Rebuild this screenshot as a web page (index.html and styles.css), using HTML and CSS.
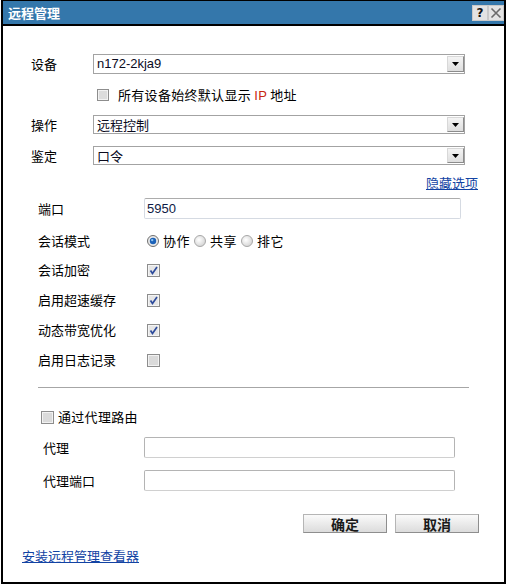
FILE: index.html
```html
<!DOCTYPE html>
<html lang="zh-CN">
<head>
<meta charset="utf-8">
<title>远程管理</title>
<link rel="stylesheet" href="styles.css">
</head>
<body>
<div class="dialog">
  <div class="titlebar">
    <span class="title">远程管理</span>
    <div class="tbtns">
      <span class="tbtn help">?</span>
      <span class="tbtn close"><svg width="12" height="12" viewBox="0 0 12 12"><path d="M1.5 1.5 L10.5 10.5 M10.5 1.5 L1.5 10.5" stroke="#6a6a6a" stroke-width="1.6" fill="none"/></svg></span>
    </div>
  </div>
  <div class="body">
    <div class="row r-device">
      <span class="lbl top-lbl">设备</span>
      <div class="select"><span class="val latin">n172-2kja9</span><span class="arrow"><svg width="7" height="4" viewBox="0 0 7 4"><path d="M0 0 H7 L3.5 4 Z" fill="#000"/></svg></span></div>
    </div>
    <div class="row r-ipcheck">
      <span class="cb"><svg width="12" height="12" viewBox="0 0 12 12"><rect x="0.5" y="0.5" width="11" height="11" fill="#f2f2f2" stroke="#8d8d8d"/><rect x="2" y="2" width="8" height="8" fill="#dcdcdc"/></svg></span>
      <span class="cbtext">所有设备始终默认显示 <span class="ip">IP</span> 地址</span>
    </div>
    <div class="row r-op">
      <span class="lbl top-lbl">操作</span>
      <div class="select sm"><span class="val">远程控制</span><span class="arrow"><svg width="7" height="4" viewBox="0 0 7 4"><path d="M0 0 H7 L3.5 4 Z" fill="#000"/></svg></span></div>
    </div>
    <div class="row r-auth">
      <span class="lbl top-lbl">鉴定</span>
      <div class="select sm"><span class="val">口令</span><span class="arrow"><svg width="7" height="4" viewBox="0 0 7 4"><path d="M0 0 H7 L3.5 4 Z" fill="#000"/></svg></span></div>
    </div>
    <div class="row r-hide">
      <a class="link" href="#">隐藏选项</a>
    </div>

    <div class="row opt r-port">
      <span class="lbl opt-lbl">端口</span>
      <div class="input port"><span class="latin num">5950</span></div>
    </div>
    <div class="row opt r-mode">
      <span class="lbl opt-lbl">会话模式</span>
      <div class="radios">
        <span class="rb"><svg width="12" height="12" viewBox="0 0 12 12"><circle cx="6" cy="6" r="5.5" fill="#e8e8e8" stroke="#6f6f6f"/><circle cx="6" cy="6" r="3.2" fill="#1c62b8"/><circle cx="5.2" cy="5.1" r="1.2" fill="#8fc4f0"/></svg></span><span class="rtext">协作</span>
        <span class="rb"><svg width="12" height="12" viewBox="0 0 12 12"><defs><radialGradient id="g1" cx="0.4" cy="0.4" r="0.7"><stop offset="0" stop-color="#ffffff"/><stop offset="1" stop-color="#cfcfcf"/></radialGradient></defs><circle cx="6" cy="6" r="5.5" fill="url(#g1)" stroke="#a8a8a8"/></svg></span><span class="rtext">共享</span>
        <span class="rb"><svg width="12" height="12" viewBox="0 0 12 12"><circle cx="6" cy="6" r="5.5" fill="url(#g1)" stroke="#a8a8a8"/></svg></span><span class="rtext">排它</span>
      </div>
    </div>
    <div class="row opt r-chk first">
      <span class="lbl opt-lbl">会话加密</span>
      <span class="cb ctl"><svg width="13" height="13" viewBox="0 0 13 13"><rect x="0.5" y="0.5" width="12" height="12" fill="#f4f4f4" stroke="#8d8d8d"/><rect x="2" y="2" width="9" height="9" fill="#e6e6e6"/><path d="M3.5 6.5 L5.5 9.5 L10 3" stroke="#2d4b9c" stroke-width="1.7" fill="none"/></svg></span>
    </div>
    <div class="row opt r-chk">
      <span class="lbl opt-lbl">启用超速缓存</span>
      <span class="cb ctl"><svg width="13" height="13" viewBox="0 0 13 13"><rect x="0.5" y="0.5" width="12" height="12" fill="#f4f4f4" stroke="#8d8d8d"/><rect x="2" y="2" width="9" height="9" fill="#e6e6e6"/><path d="M3.5 6.5 L5.5 9.5 L10 3" stroke="#2d4b9c" stroke-width="1.7" fill="none"/></svg></span>
    </div>
    <div class="row opt r-chk">
      <span class="lbl opt-lbl">动态带宽优化</span>
      <span class="cb ctl"><svg width="13" height="13" viewBox="0 0 13 13"><rect x="0.5" y="0.5" width="12" height="12" fill="#f4f4f4" stroke="#8d8d8d"/><rect x="2" y="2" width="9" height="9" fill="#e6e6e6"/><path d="M3.5 6.5 L5.5 9.5 L10 3" stroke="#2d4b9c" stroke-width="1.7" fill="none"/></svg></span>
    </div>
    <div class="row opt r-chk">
      <span class="lbl opt-lbl">启用日志记录</span>
      <span class="cb ctl"><svg width="13" height="13" viewBox="0 0 13 13"><rect x="0.5" y="0.5" width="12" height="12" fill="#f2f2f2" stroke="#8d8d8d"/><rect x="2" y="2" width="9" height="9" fill="#dadada"/></svg></span>
    </div>

    <div class="sep"></div>

    <div class="row r-proxycheck">
      <span class="cb"><svg width="13" height="13" viewBox="0 0 13 13"><rect x="0.5" y="0.5" width="12" height="12" fill="#f2f2f2" stroke="#8d8d8d"/><rect x="2" y="2" width="9" height="9" fill="#dadada"/></svg></span>
      <span class="cbtext tight">通过代理路由</span>
    </div>
    <div class="row proxy r-proxy">
      <span class="lbl proxy-lbl">代理</span>
      <div class="input pinput"></div>
    </div>
    <div class="row proxy r-proxyport">
      <span class="lbl proxy-lbl">代理端口</span>
      <div class="input pinput"></div>
    </div>

    <div class="row r-buttons">
      <button class="btn">确定</button>
      <button class="btn">取消</button>
    </div>

    <div class="row r-install">
      <a class="link" href="#">安装远程管理查看器</a>
    </div>
  </div>
</div>
</body>
</html>
```

FILE: styles.css
```css
html, body {
  margin: 0;
  padding: 0;
  background: #fff;
}
body {
  font-family: "Noto Sans CJK SC", "Noto Sans", sans-serif;
  font-size: 13px;
  color: #000;
}
.dialog {
  margin-left: 1px;
  width: 505px;
  height: 584px;
  box-sizing: border-box;
  border: 2px solid #000;
  border-top: 1px solid #000;
  background: #fff;
  display: flex;
  flex-direction: column;
}
.titlebar {
  height: 23px;
  flex: none;
  background: #3477ab;
  border-bottom: 2px solid #000;
  display: flex;
  justify-content: space-between;
  align-items: flex-start;
  padding-left: 5px;
}
.title {
  color: #fff;
  font-weight: 700;
  font-size: 13px;
  line-height: 23px;
}
.tbtns {
  display: flex;
  margin-top: 4px;
}
.tbtn {
  width: 16px;
  height: 16px;
  box-sizing: border-box;
  background: #e3e3e3;
  border: 1px solid #c9c9c9;
  display: flex;
  align-items: center;
  justify-content: center;
}
.help {
  font-family: "DejaVu Sans", sans-serif;
  font-weight: 700;
  font-size: 12px;
  color: #111;
  line-height: 14px;
}
.close svg { display: block; }

.body {
  flex: 1;
  display: flex;
  flex-direction: column;
  padding-top: 28px;
}
.row {
  display: flex;
  align-items: center;
  flex: none;
}
.lbl {
  line-height: 18px;
  white-space: nowrap;
}
.top-lbl {
  width: 62px;
  padding-left: 28px;
  flex: none;
}
.latin {
  font-family: "Liberation Sans", Arial, sans-serif;
  font-size: 13px;
}
.select {
  width: 372px;
  height: 20px;
  box-sizing: border-box;
  border: 1px solid #a3a3a3;
  display: flex;
  align-items: center;
  justify-content: space-between;
  background: #fff;
}
.select.sm { height: 19px; }
.select .val {
  padding-left: 3px;
  color: #0b0b1e;
  line-height: 16px;
}
.arrow {
  width: 17px;
  height: 16px;
  box-sizing: border-box;
  border: 1px solid #8c8c8c;
  border-top-color: #d8d8d8;
  border-left-color: #d8d8d8;
  background: linear-gradient(#f4f4f4, #dedede);
  display: flex;
  align-items: center;
  justify-content: center;
}
.arrow svg { display: block; }
.select.sm .arrow { height: 15px; }

.r-ipcheck {
  height: 20px;
  margin-top: 11px;
  padding-left: 94px;
}
.cb svg, .rb svg { display: block; }
.cbtext {
  margin-left: 9px;
  line-height: 18px;
  letter-spacing: 0.3px;
}
.cbtext.tight { margin-left: 4px; }
.ip { color: #c8260e; font-family: "Liberation Sans", Arial, sans-serif; }

.r-op { margin-top: 10px; }
.r-auth { margin-top: 12px; }
.r-hide {
  margin-top: 10px;
  height: 16px;
  justify-content: flex-end;
  padding-right: 26px;
}
.link {
  color: #1243a3;
  text-decoration: underline;
  line-height: 16px;
}

.opt-lbl {
  width: 106px;
  padding-left: 35px;
  flex: none;
}
.input {
  height: 21px;
  box-sizing: border-box;
  border: 1px solid #d5dae2;
  border-top-color: #acacac;
  border-radius: 2px;
  display: flex;
  align-items: center;
  background: #fff;
}
.port { width: 317px; }
.num {
  padding-left: 2px;
  color: #0e1a44;
}
.r-port { margin-top: 7px; }
.r-mode {
  margin-top: 12px;
  height: 20px;
}
.radios {
  display: flex;
  align-items: center;
  padding-left: 3px;
}
.rtext {
  margin-left: 4px;
  margin-right: 4px;
  line-height: 18px;
  letter-spacing: 0.5px;
}
.r-chk {
  height: 20px;
  margin-top: 10px;
}
.r-chk.first { margin-top: 9px; }
.ctl { margin-left: 3px; }

.sep {
  flex: none;
  margin-top: 17px;
  margin-left: 35px;
  width: 431px;
  height: 1px;
  background: #a6a6a6;
}

.r-proxycheck {
  margin-top: 19px;
  height: 20px;
  padding-left: 38px;
}
.proxy-lbl {
  width: 101px;
  padding-left: 40px;
  flex: none;
}
.pinput {
  width: 311px;
  border-color: #b4b4b4;
  border-bottom-color: #d0d0d0;
}
.r-proxy { margin-top: 10px; }
.r-proxyport { margin-top: 12px; }

.r-buttons {
  margin-top: 23px;
  justify-content: flex-end;
  padding-right: 25px;
  gap: 8px;
}
.btn {
  width: 84px;
  height: 19px;
  box-sizing: border-box;
  margin: 0;
  padding: 0;
  border: 1px solid #8e8e8e;
  border-top-color: #b5b5b5;
  border-left-color: #b5b5b5;
  background: linear-gradient(#fafafa, #dcdcdc);
  font-family: "Noto Sans CJK SC", sans-serif;
  font-weight: 700;
  font-size: 14px;
  line-height: 16px;
  color: #1a1a1a;
}
.r-install {
  margin-top: 15px;
  height: 16px;
  padding-left: 19px;
}
```
